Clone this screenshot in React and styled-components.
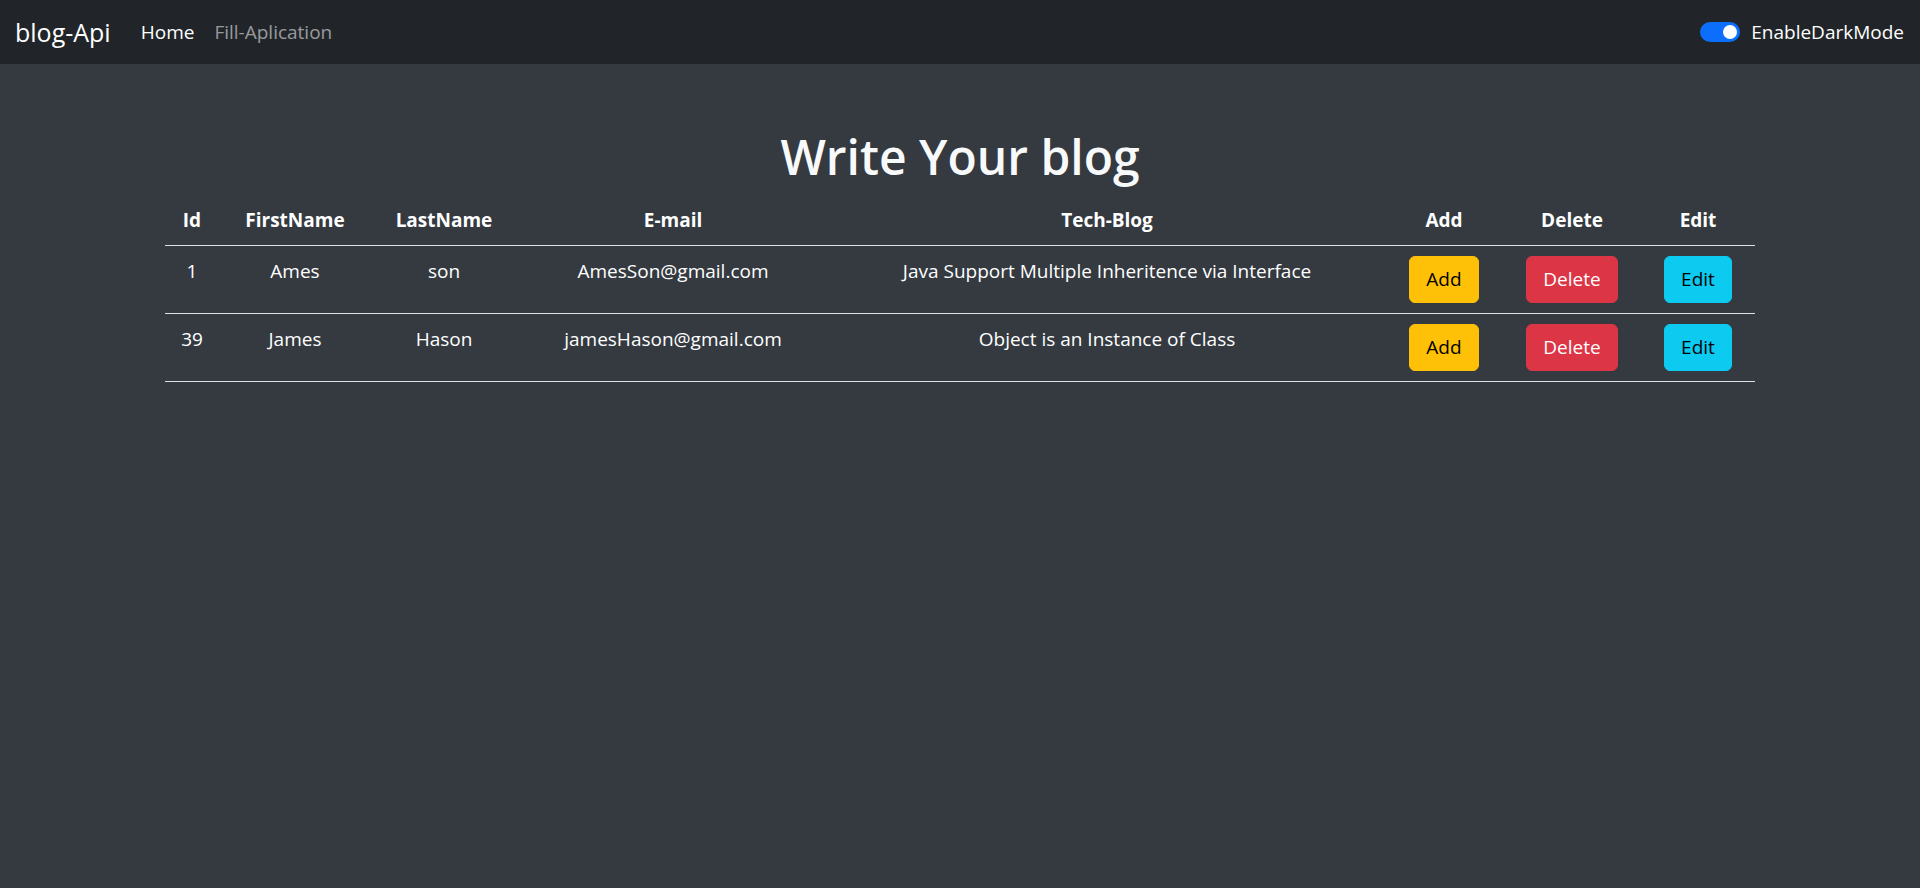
import React from 'react';
import styled, { createGlobalStyle } from 'styled-components';

const GlobalStyle = createGlobalStyle`
	html, body {
		margin: 0;
		padding: 0;
		background-color: #343a40;
		font-family: 'Segoe UI', 'Open Sans', 'Noto Sans', sans-serif;
		font-size: 19px;
		line-height: 30px;
		color: #f8f9fa;
	}
	#root {
		min-height: 100vh;
	}
`;

const Navbar = styled.nav`
	height: 64px;
	background-color: #212529;
	display: flex;
	align-items: center;
	justify-content: space-between;
	padding: 0 16px 0 15px;
	box-sizing: border-box;
`;

const NavLeft = styled.div`
	display: flex;
	align-items: center;
`;

const Brand = styled.a`
	font-size: 25px;
	color: #fff;
	margin-right: 20px;
	text-decoration: none;
`;

const NavLink = styled.a`
	padding: 0 10px;
	font-size: 19px;
	color: ${(props) => (props.active ? '#fff' : 'rgba(255, 255, 255, 0.55)')};
	text-decoration: none;
`;

const SwitchWrap = styled.label`
	display: flex;
	align-items: center;
	gap: 11px;
	color: #fff;
	font-size: 19px;
`;

const Switch = styled.span`
	width: 40px;
	height: 20px;
	border-radius: 10px;
	background-color: #0d6efd;
	display: flex;
	align-items: center;
	justify-content: flex-end;
	padding: 0 3px;
	box-sizing: border-box;
	&& > span {
		width: 14px;
		height: 14px;
		border-radius: 50%;
		background: #fff;
	}
`;

const Main = styled.main`
	width: 1590px;
	margin: 0 auto;
	padding-top: 64px;
`;

const Title = styled.h1`
	text-align: center;
	font-size: 48px;
	font-weight: 600;
	line-height: 58px;
	margin: 0 0 9px 0;
	color: #f8f9fa;
`;

const Table = styled.table`
	width: 100%;
	table-layout: fixed;
	border-collapse: collapse;
	text-align: center;
	color: #fff;
`;

const Th = styled.th`
	padding: 10px 0;
	font-weight: 700;
	border-bottom: 1px solid #dee2e6;
`;

const Td = styled.td`
	padding: 10px 0;
	vertical-align: top;
	border-bottom: 1px solid #dee2e6;
`;

const colors = {
	warning: { bg: '#ffc107', fg: '#000' },
	danger: { bg: '#dc3545', fg: '#fff' },
	info: { bg: '#0dcaf0', fg: '#000' },
};

const Button = styled.button`
	display: inline-block;
	font-family: inherit;
	font-size: 19px;
	line-height: 29px;
	padding: 8px 16px;
	border: 1px solid ${(props) => colors[props.variant].bg};
	border-radius: 6px;
	background-color: ${(props) => colors[props.variant].bg};
	color: ${(props) => colors[props.variant].fg};
	cursor: pointer;
`;

const columns = [
	{ title: 'Id', width: 54 },
	{ title: 'FirstName', width: 152 },
	{ title: 'LastName', width: 146 },
	{ title: 'E-mail', width: 312 },
	{ title: 'Tech-Blog', width: 556 },
	{ title: 'Add', width: 118 },
	{ title: 'Delete', width: 138 },
	{ title: 'Edit', width: 114 },
];

const blogs = [
	{
		id: 1,
		firstName: 'Ames',
		lastName: 'son',
		email: 'AmesSon@gmail.com',
		blog: 'Java Support Multiple Inheritence via Interface',
	},
	{
		id: 39,
		firstName: 'James',
		lastName: 'Hason',
		email: 'jamesHason@gmail.com',
		blog: 'Object is an Instance of Class',
	},
];

export default function App() {
	return (
		<>
			<GlobalStyle />
			<Navbar>
				<NavLeft>
					<Brand href="#">blog-Api</Brand>
					<NavLink href="#" active>
						Home
					</NavLink>
					<NavLink href="#">Fill-Aplication</NavLink>
				</NavLeft>
				<SwitchWrap>
					<Switch>
						<span />
					</Switch>
					EnableDarkMode
				</SwitchWrap>
			</Navbar>
			<Main>
				<Title>Write Your blog</Title>
				<Table>
					<colgroup>
						{columns.map((c) => (
							<col key={c.title} style={{ width: c.width }} />
						))}
					</colgroup>
					<thead>
						<tr>
							{columns.map((c) => (
								<Th key={c.title}>{c.title}</Th>
							))}
						</tr>
					</thead>
					<tbody>
						{blogs.map((b) => (
							<tr key={b.id}>
								<Td>{b.id}</Td>
								<Td>{b.firstName}</Td>
								<Td>{b.lastName}</Td>
								<Td>{b.email}</Td>
								<Td>{b.blog}</Td>
								<Td>
									<Button variant="warning">Add</Button>
								</Td>
								<Td>
									<Button variant="danger">Delete</Button>
								</Td>
								<Td>
									<Button variant="info">Edit</Button>
								</Td>
							</tr>
						))}
					</tbody>
				</Table>
			</Main>
		</>
	);
}
